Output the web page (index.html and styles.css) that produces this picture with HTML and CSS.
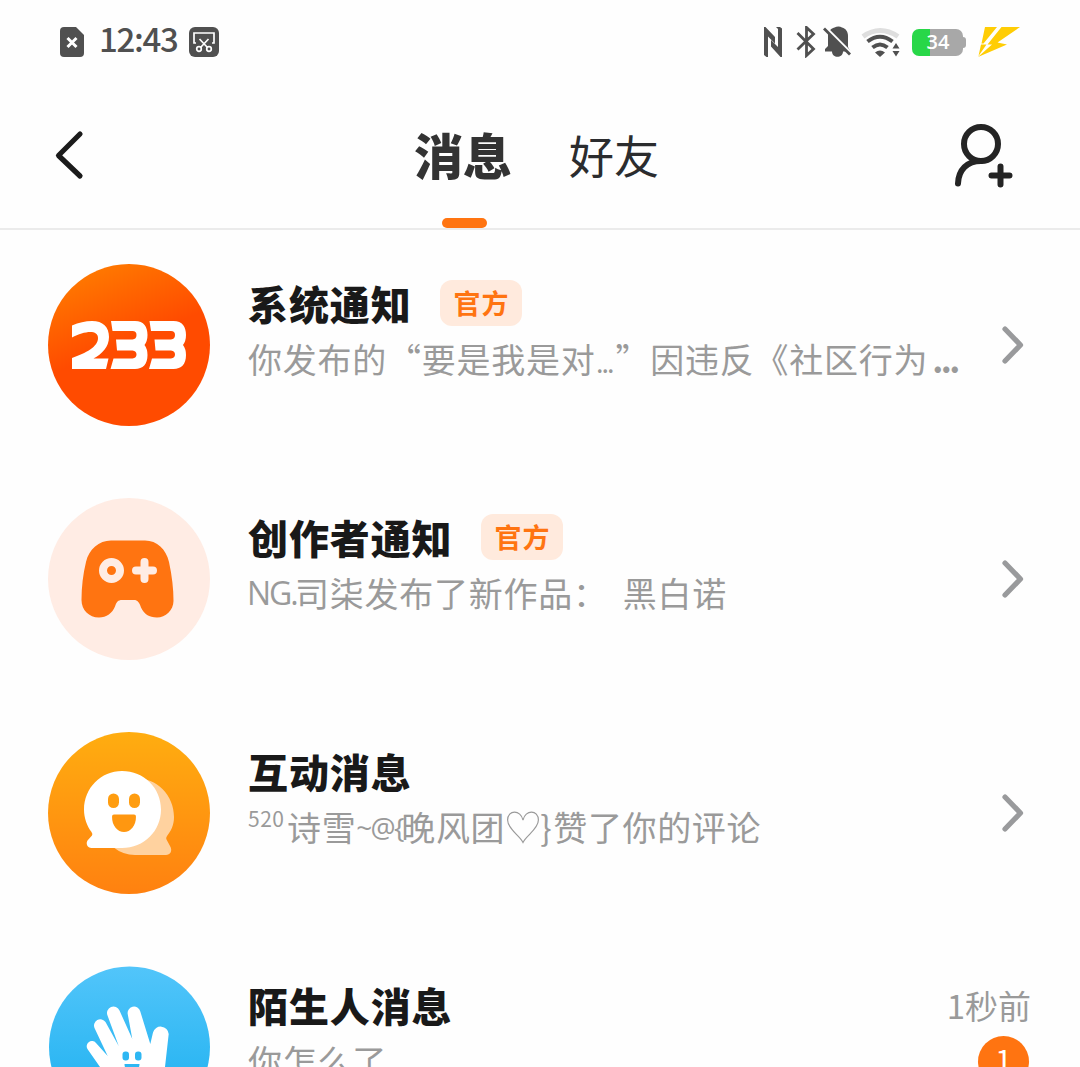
FILE: index.html
```html
<!DOCTYPE html>
<html lang="zh-CN">
<head>
<meta charset="utf-8">
<title>消息</title>
<link rel="stylesheet" href="styles.css">
</head>
<body>
<div class="statusbar">
  <svg class="st-sim" width="24" height="30" viewBox="0 0 24 30"><path d="M4 0H16L24 8V26a4 4 0 0 1-4 4H4a4 4 0 0 1-4-4V4a4 4 0 0 1 4-4z" fill="#505050"/><path d="M7.500 11l9 9M16.500 11l-9 9" stroke="#fff" stroke-width="3"/></svg>
  <span class="clock">12:43</span>
  <svg class="st-cut" width="30" height="30" viewBox="0 0 30 30"><rect width="30" height="30" rx="6" fill="#505050"/><g fill="none" stroke="#fff" stroke-width="1.700"><path d="M7 16H5V6H25V16H23"/><path d="M10.500 12l8 8.500M19.500 12l-8 8.500"/><circle cx="10" cy="22" r="2.300"/><circle cx="20" cy="22" r="2.300"/></g></svg>
  <span class="spacer"></span>
  <svg width="138" height="32" viewBox="762 26 138 32">
    <g fill="#505050">
      <path d="M764 27h1.500L775 37v6.500L768 36.500V57h-1.500L764 55zM776 27h4l2 1.500V57h-1.500L771 46.500V40l7 7V29z"/>
      <path d="M797.500 33l16 16-7 6.500v-28l7 6.500-16 15.500" fill="none" stroke="#505050" stroke-width="2.800"/>
      <path d="M828 34C829.500 29 833 28 834.500 27.500 837 26 840 26 842 27.500 846 28.500 848 32 848 36V47L850.500 51.500H843C843 58.500 832 58.500 832 51.500H825V49L828 46z"/>
    </g>
    <path d="M824 26l29 29" stroke="#fff" stroke-width="3"/>
    <path d="M824 28.500l26 26" stroke="#505050" stroke-width="2.800"/>
    <g fill="none">
      <path d="M863 36.500q17-12 35 0" stroke="#dedede" stroke-width="5"/>
      <path d="M867.500 41.500q12.500-9.500 25 0M872.500 47.500q7.500-6 15 0" stroke="#505050" stroke-width="4"/>
    </g>
    <path d="M875 52.500q5-4 10 0l-5 4.500zM892.500 48.500l3.500-5.500 3.500 5.500zM892.500 51h7l-3.500 5.500z" fill="#505050"/>
  </svg>
  <span class="battery"><span class="battery-text">34</span></span>
  <svg class="st-bolt" width="42" height="32" viewBox="978 25 42 32"><path d="M985 26H997L983.500 42.500H981.500zM1001.500 26H1020L997.500 41.500 1007 43.500 978 56 992 43.500H987.500zM981 43.500H986.500L978.500 55z" fill="#ffcd05"/></svg>
</div>
<header class="navbar">
  <svg class="back" width="30" height="50" viewBox="0 0 30 50"><path d="M26 4L4.500 25.500 26 46" fill="none" stroke="#1b1b1b" stroke-width="5.200" stroke-linecap="round" stroke-linejoin="round"/></svg>
  <nav class="tabs">
    <div class="tab tab-active">消息</div>
    <div class="tab">好友</div>
  </nav>
  <svg class="adduser" width="60" height="66" viewBox="0 0 60 66"><g fill="none" stroke="#242424" stroke-width="6" stroke-linecap="round"><circle cx="28" cy="20" r="17"/><path d="M28 37C14 37 5.500 46 5 59.500M47.500 42.500v18M38.500 51.500h18"/></g></svg>
</header>
<main class="list">
  <section class="row">
    <svg class="avatar" viewBox="0 0 162 162">
      <defs><linearGradient id="g1" x1=".15" y1=".05" x2=".5" y2=".9"><stop offset="0" stop-color="#ff7b00"/><stop offset=".58" stop-color="#ff4b00"/><stop offset="1" stop-color="#ff4b00"/></linearGradient></defs>
      <circle cx="81" cy="81" r="81" fill="url(#g1)"/>
      <g fill="#fff">
        <path d="M24 61.500Q34 57 44 57C55 57 61 63 61 73 61 83 54 90 45.500 94.500H60.500L58 105H24V94C38 89 50 83 50 74 50 65 36 67 24 73.500z"/>
        <g id="three"><path d="M63 57H87C96 57 99.500 63 99.500 71Q99.500 77 96.500 81 99.500 85 99.500 91C99.500 100 95 105 87 105H62.500L65.500 94.500H84.500Q88.500 94 88.500 90.500T84.500 86.500H69L68 75.500H84.500Q88.500 75 88.500 71T84.500 67H64.500z"/></g>
        <use href="#three" x="38.500"/>
      </g>
    </svg>
    <div class="body">
      <div class="line"><h2 class="title">系统通知</h2><span class="tag">官方</span></div>
      <p class="preview">你发布的“要是我是对<span class="dots">...</span>”因违反《社区行为<b class="cutoff">...</b></p>
    </div>
    <svg class="chev" viewBox="0 0 24 40"><path d="M4 4L19.500 20 4 36"/></svg>
  </section>
  <section class="row">
    <svg class="avatar" viewBox="0 0 162 162">
      <circle cx="81" cy="81" r="81" fill="#ffece4"/>
      <path d="M63 42.500H97C109 42.500 118 51 121 64 124 78 125.500 91 125.500 103 125.500 112 117.500 119.500 109 119.500 101 119.500 96 116 93 109.500 91.500 104.500 89.500 102 86 102H74C70 102 68.500 104 67 108.500 64.500 115 58.500 119.500 51 119.500 41 119.500 33.500 112 33.500 102 33.500 89 35 76 38 64 41 51 51 42.500 63 42.500z" fill="#ff7411"/>
      <circle cx="63.500" cy="72.500" r="8.500" fill="none" stroke="#ffece4" stroke-width="8"/>
      <path d="M96.500 64v17M88 72.500h17" stroke="#ffece4" stroke-width="8" stroke-linecap="round"/>
    </svg>
    <div class="body">
      <div class="line"><h2 class="title">创作者通知</h2><span class="tag">官方</span></div>
      <p class="preview"><span class="latin-ng">NG.</span>司柒发布了新作品：<span class="gap"></span>黑白诺</p>
    </div>
    <svg class="chev" viewBox="0 0 24 40"><path d="M4 4L19.500 20 4 36"/></svg>
  </section>
  <section class="row">
    <svg class="avatar" viewBox="0 0 162 162">
      <defs><linearGradient id="g3" x1="0" y1="0" x2="0" y2="1"><stop offset="0" stop-color="#ffad10"/><stop offset="1" stop-color="#ff8110"/></linearGradient></defs>
      <circle cx="81" cy="81" r="81" fill="url(#g3)"/>
      <path d="M87 46C109 46 126 63 126 85 126 93 123 99 119 104Q117.500 106 118.500 107.500L122 114C125 119 122 123 118 123H87Q75 123 65 115z" fill="#ffd29f"/>
      <path d="M74 39C96 39 113 56 113 77.500S96 116 74 116H43.500C39.500 116 37.500 111.500 39.500 108.500L44 103.500Q45 102 43.500 100C39 94 36 86 36 77.500 36 56 53 39 74 39z" fill="#fff"/>
      <rect x="60" y="61.500" width="11" height="14.500" rx="5.500" fill="#ff9d10"/><rect x="81" y="61.500" width="11" height="14.500" rx="5.500" fill="#ff9d10"/>
      <path d="M66 82.500H86Q88 82.500 88 84.500C88 94 82.500 100 76 100S64 94 64 84.500Q64 82.500 66 82.500z" fill="#ff9710"/>
    </svg>
    <div class="body">
      <div class="line"><h2 class="title">互动消息</h2></div>
      <p class="preview preview-like"><span class="sup">520</span>诗雪<span class="at">~@{</span>晚风团<svg class="heart" width="34" height="34" viewBox="0 0 32 32"><path d="M16 30.500C13 24 1.500 18 1.500 9.500 1.500-.5 14-.5 16 9.500 18-.5 30.500-.5 30.500 9.500 30.500 18 19 24 16 30.500z"/></svg><span class="brace">}</span>赞了你的评论</p>
    </div>
    <svg class="chev" viewBox="0 0 24 40"><path d="M4 4L19.500 20 4 36"/></svg>
  </section>
  <section class="row">
    <svg class="avatar" viewBox="0 0 162 162">
      <defs><linearGradient id="g4" x1="0" y1="0" x2="0" y2="1"><stop offset="0" stop-color="#52c5fa"/><stop offset=".62" stop-color="#2eb7f3"/><stop offset="1" stop-color="#1caeee"/></linearGradient></defs>
      <circle cx="81.500" cy="81" r="80.500" fill="url(#g4)"/>
      <path d="M52 101L39.800 83.500A5 5 0 0 1 48 77L59.700 90 46.500 62A6.300 6.300 0 0 1 57.500 56L70.700 80 59.500 49.500A6.500 6.500 0 0 1 71.500 44.500L84.300 73 79.800 48.500A6.400 6.400 0 0 1 92.300 45.500L102.300 78 105 66.500A8 8 0 0 1 120.700 68L117 101 108 130H66z" fill="#fff"/>
      <rect x="74.500" y="85.500" width="6.500" height="9" rx="3" fill="#2eb7f3"/><rect x="87" y="85.500" width="6.500" height="9" rx="3" fill="#2eb7f3"/><path d="M76.500 98h15c0 11-15 11-15 0z" fill="#2eb7f3"/>
    </svg>
    <div class="body">
      <div class="line"><h2 class="title">陌生人消息</h2></div>
      <p class="preview">你怎么了</p>
    </div>
    <div class="meta"><time class="time">1秒前</time><span class="count">1</span></div>
  </section>
</main>
</body>
</html>
```

FILE: styles.css
```css
* { box-sizing: border-box; }
html, body { margin: 0; height: 1067px; overflow: hidden; }
body {
  display: flex; flex-direction: column; background: #fefefe; color: #191919;
  font-family: "Noto Sans CJK SC", sans-serif;
}
svg { flex: none; display: block; }

.statusbar { flex: none; display: flex; align-items: center; height: 84px; padding: 0 60px; }
.clock { width: 79px; margin-left: 15px; margin-top: -9px; font: 500 33px/40px "Noto Sans CJK SC", sans-serif; letter-spacing: -1.3px; color: #505050; white-space: nowrap; }
.st-cut { margin-left: 11px; }
.spacer { flex: 1; }
.battery {
  position: relative; width: 51px; height: 27px; margin-left: 12px; border-radius: 7px;
  background: linear-gradient(90deg, #28d748 18px, #a8a8a8 18px); text-align: center;
}
.battery::after { content: ""; position: absolute; left: 51px; top: 8px; width: 3px; height: 11px; border-radius: 0 3px 3px 0; background: #a8a8a8; }
.battery-text { display: block; padding-left: 1px; font: 600 20px/25px "Open Sans", sans-serif; color: #fff; }
.st-bolt { margin-left: 15px; }

.navbar { flex: none; display: flex; justify-content: space-between; height: 146px; padding: 38px 67px 0 54px; border-bottom: 2px solid #ebebeb; }
.back { margin-top: 8px; }
.tabs { display: flex; gap: 55px; margin-left: 40px; }
.tab { width: 94px; height: 106px; font-size: 45px; line-height: 65px; color: #2b2c2e; white-space: nowrap; }
.tab-active { position: relative; width: 100px; font-size: 49px; font-weight: 900; line-height: 63px; color: #333; }
.tab-active::after { content: ""; position: absolute; left: 28px; bottom: 0; width: 45px; height: 10px; border-radius: 5px; background: #ff7411; }
.adduser { margin-top: 2px; }

.list { flex: none; margin-top: -2px; }
.row { display: flex; align-items: center; height: 234px; padding: 0 48px; }
.avatar { width: 162px; height: 162px; }
.body { flex: 1; min-width: 0; height: 162px; margin-left: 38px; padding-top: 14px; }
.line { display: flex; align-items: center; height: 50px; }
.title { margin: 0; font-size: 40px; font-weight: 900; line-height: 46px; letter-spacing: 0.9px; color: #191919; white-space: nowrap; }
.tag { width: 82px; height: 46px; margin-left: 28px; padding-left: 2px; border-radius: 12px; background: #ffeadd; color: #ff7411; font-size: 27px; font-weight: 700; line-height: 45px; letter-spacing: 1px; text-align: center; }
.preview { display: flex; height: 50px; margin: 6px 0 0; font-size: 34px; line-height: 50px; letter-spacing: 0.75px; color: #9a9a9a; white-space: nowrap; }
.preview-like { letter-spacing: 0.65px; }
.dots { width: 20px; font-weight: 300; letter-spacing: -3px; }
.cutoff { margin-left: 4px; letter-spacing: -2.5px; }
.latin-ng { width: 48px; margin-left: -1px; font: 32px/50px "Open Sans", sans-serif; letter-spacing: -2px; }
.gap { width: 15px; }
.sup { width: 39px; margin-top: -9px; font-size: 21px; letter-spacing: 0.5px; }
.at { width: 45px; font-family: "Open Sans", sans-serif; font-size: 28px; letter-spacing: -1.7px; }
.heart { margin: 8px 0 0 1px; fill: none; stroke: #9a9a9a; stroke-width: 1.1; }
.brace { width: 13px; }
.chev { width: 24px; height: 40px; margin: 0 7px 0 0; fill: none; stroke: #999a9c; stroke-width: 5.2; stroke-linecap: round; stroke-linejoin: round; }
.meta { display: flex; flex-direction: column; align-items: flex-end; height: 162px; padding-top: 14px; }
.time { font-size: 33px; line-height: 50px; color: #9a9a9a; margin-right: 1px; }
.count { width: 51px; height: 51px; margin: 6px 3px 0 0; border-radius: 50%; background: #ff7411; color: #fff; font-size: 30px; line-height: 46px; text-align: center; }
```
